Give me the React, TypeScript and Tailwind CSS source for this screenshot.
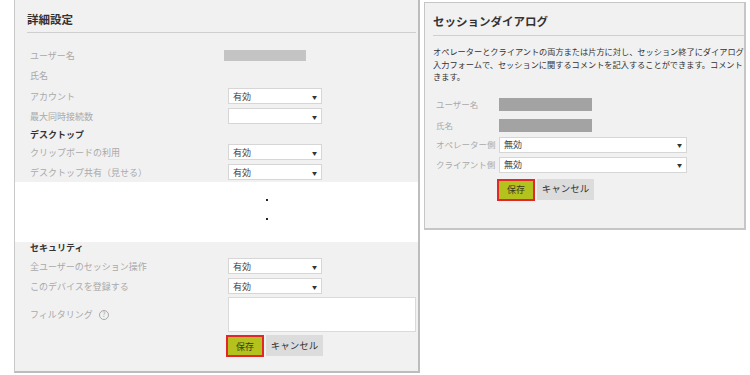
import React from 'react';

const font = { fontFamily: '"Noto Sans CJK JP", "Noto Sans", sans-serif' };

const Select: React.FC<{ value?: string; w: string }> = ({ value, w }) => (
    <div className={`${w} h-[16px] bg-white border border-[#d6d6d6] flex items-center justify-between pl-[4px] pr-[4px]`}>
        <span className="text-[9px] text-[#444] leading-none">{value}</span>
        <span className="text-[5px] text-[#333] leading-none">▼</span>
    </div>
);

const Row: React.FC<{ label: string; children?: React.ReactNode }> = ({ label, children }) => (
    <div className="h-[20px] flex items-center pl-[15px]">
        <div className="w-[198px] text-[9px] text-[#a9a9a9] leading-none">{label}</div>
        {children}
    </div>
);

const Heading: React.FC<{ text: string; h: string }> = ({ text, h }) => (
    <div className={`${h} flex items-center pl-[15px] text-[9px] font-bold text-[#333] leading-none`}>{text}</div>
);

const Buttons: React.FC = () => (
    <div className="flex items-start gap-[2px]">
        <div className="w-[38px] h-[22px] border-2 border-[#e3262a] bg-[#b3c21d] flex items-center justify-center text-[9px] text-[#3a3a1a] leading-none">
            保存
        </div>
        <div className="w-[57px] h-[21px] bg-[#dcdcdc] flex items-center justify-center text-[9.5px] text-[#333] leading-none">
            キャンセル
        </div>
    </div>
);

const DetailPanel: React.FC = () => (
    <div className="ml-[14px] w-[406px] h-[373px] bg-[#f1f1f1] border-l border-r-2 border-b-2 border-l-[#c9c9c9] border-r-[#bdbdbd] border-b-[#bdbdbd] flex flex-col">
        <div className="ml-[12px] mr-[2px] pt-[12px] pb-[6px] border-b border-[#cfcfcf]">
            <div className="text-[11.5px] font-bold text-[#333] leading-[14px]">詳細設定</div>
        </div>
        <div className="mt-[12px] flex flex-col">
            <Row label="ユーザー名">
                <div className="-ml-[4px] w-[82px] h-[11px] bg-[#c4c4c4]" />
            </Row>
            <Row label="氏名" />
            <div className="h-[1px]" />
            <Row label="アカウント">
                <Select value="有効" w="w-[94px]" />
            </Row>
            <Row label="最大同時接続数">
                <Select w="w-[94px]" />
            </Row>
            <Heading text="デスクトップ" h="h-[16px]" />
            <Row label="クリップボードの利用">
                <Select value="有効" w="w-[94px]" />
            </Row>
            <Row label="デスクトップ共有（見せる）">
                <Select value="有効" w="w-[94px]" />
            </Row>
            <div className="h-[60px] bg-white flex flex-col items-center pt-[17px] gap-[17px]">
                <div className="w-[2px] h-[2px] bg-[#222] ml-[100px]" />
                <div className="w-[2px] h-[2px] bg-[#222] ml-[100px]" />
            </div>
            <Heading text="セキュリティ" h="h-[11px]" />
            <div className="h-[3px]" />
            <Row label="全ユーザーのセッション操作">
                <Select value="有効" w="w-[94px]" />
            </Row>
            <Row label="このデバイスを登録する">
                <Select value="有効" w="w-[94px]" />
            </Row>
            <div className="mt-[1px] h-[35px] flex items-center pl-[15px]">
                <div className="w-[198px] flex items-center gap-[6px] text-[9px] text-[#a9a9a9] leading-none">
                    フィルタリング
                    <span className="w-[10px] h-[10px] rounded-full border border-[#a9a9a9] flex items-center justify-center text-[7px] leading-none">?</span>
                </div>
                <div className="w-[188px] h-[35px] bg-white border border-[#dadada]" />
            </div>
            <div className="mt-[3px] pl-[211px]">
                <Buttons />
            </div>
        </div>
    </div>
);

const SessionPanel: React.FC = () => (
    <div className="mt-[2px] ml-[4px] w-[322px] h-[228px] bg-[#f1f1f1] border border-r-2 border-b-2 border-[#c6c6c6] overflow-hidden flex flex-col">
        <div className="ml-[8px] pt-[11px] pb-[7px] border-b border-[#cfcfcf]">
            <div className="text-[11.5px] font-bold text-[#333] leading-[14px]">セッションダイアログ</div>
        </div>
        <div className="ml-[8px] mt-[9px] text-[8.2px] text-[#333] leading-[12.5px] whitespace-nowrap">
            <div>オペレーターとクライアントの両方または片方に対し、セッション終了にダイアログ</div>
            <div>入力フォームで、セッションに関するコメントを記入することができます。コメント</div>
            <div>きます。</div>
        </div>
        <div className="mt-[15px] flex flex-col gap-[4px] pl-[11px]">
            <div className="h-[13px] flex items-center">
                <div className="w-[63px] text-[8.5px] text-[#a9a9a9] leading-none">ユーザー名</div>
                <div className="w-[93px] h-[13px] bg-[#a3a3a3]" />
            </div>
            <div className="mt-[4px] h-[13px] flex items-center">
                <div className="w-[63px] text-[8.5px] text-[#a9a9a9] leading-none">氏名</div>
                <div className="w-[93px] h-[13px] bg-[#a3a3a3]" />
            </div>
            <div className="mt-[1px] h-[16px] flex items-center">
                <div className="w-[63px] text-[8.5px] text-[#a9a9a9] leading-none">オペレーター側</div>
                <Select value="無効" w="w-[188px]" />
            </div>
            <div className="h-[16px] flex items-center">
                <div className="w-[63px] text-[8.5px] text-[#a9a9a9] leading-none">クライアント側</div>
                <Select value="無効" w="w-[188px]" />
            </div>
            <div className="mt-[2px] pl-[61px]">
                <Buttons />
            </div>
        </div>
    </div>
);

export default function App() {
    return (
        <div className="w-[750px] h-[375px] bg-white flex items-start overflow-hidden" style={font}>
            <DetailPanel />
            <SessionPanel />
        </div>
    );
}
